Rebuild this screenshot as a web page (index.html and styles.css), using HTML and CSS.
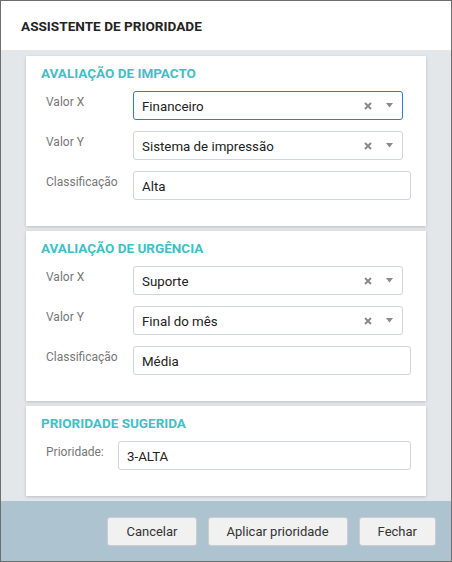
FILE: index.html
```html
<!DOCTYPE html>
<html lang="pt">
<head>
<meta charset="utf-8">
<title>Assistente de prioridade</title>
<link rel="stylesheet" href="styles.css">
</head>
<body>
<div class="dialog">
  <div class="header"><h1 class="title">ASSISTENTE DE PRIORIDADE</h1></div>
  <div class="content">
    <section class="panel">
      <h2 class="panel-title">AVALIAÇÃO DE IMPACTO</h2>
      <div class="form">
        <label class="label">Valor X</label>
        <div class="field select focused"><span class="value">Financeiro</span>
          <svg class="clear" width="8" height="8" viewBox="0 0 8 8"><path d="M1 1L7 7M7 1L1 7" stroke="#8a8a8a" stroke-width="2"/></svg>
          <svg class="caret" width="7" height="5" viewBox="0 0 7 5"><path d="M0 0H7L3.5 4.5Z" fill="#8a8a8a"/></svg>
        </div>
        <label class="label">Valor Y</label>
        <div class="field select"><span class="value">Sistema de impressão</span>
          <svg class="clear" width="8" height="8" viewBox="0 0 8 8"><path d="M1 1L7 7M7 1L1 7" stroke="#8a8a8a" stroke-width="2"/></svg>
          <svg class="caret" width="7" height="5" viewBox="0 0 7 5"><path d="M0 0H7L3.5 4.5Z" fill="#8a8a8a"/></svg>
        </div>
        <label class="label">Classificação</label>
        <div class="field"><span class="value">Alta</span></div>
      </div>
    </section>
    <section class="panel">
      <h2 class="panel-title">AVALIAÇÃO DE URGÊNCIA</h2>
      <div class="form">
        <label class="label">Valor X</label>
        <div class="field select"><span class="value">Suporte</span>
          <svg class="clear" width="8" height="8" viewBox="0 0 8 8"><path d="M1 1L7 7M7 1L1 7" stroke="#8a8a8a" stroke-width="2"/></svg>
          <svg class="caret" width="7" height="5" viewBox="0 0 7 5"><path d="M0 0H7L3.5 4.5Z" fill="#8a8a8a"/></svg>
        </div>
        <label class="label">Valor Y</label>
        <div class="field select"><span class="value">Final do mês</span>
          <svg class="clear" width="8" height="8" viewBox="0 0 8 8"><path d="M1 1L7 7M7 1L1 7" stroke="#8a8a8a" stroke-width="2"/></svg>
          <svg class="caret" width="7" height="5" viewBox="0 0 7 5"><path d="M0 0H7L3.5 4.5Z" fill="#8a8a8a"/></svg>
        </div>
        <label class="label">Classificação</label>
        <div class="field"><span class="value">Média</span></div>
      </div>
    </section>
    <section class="panel">
      <h2 class="panel-title">PRIORIDADE SUGERIDA</h2>
      <div class="form form-narrow">
        <label class="label">Prioridade:</label>
        <div class="field"><span class="value">3-ALTA</span></div>
      </div>
    </section>
  </div>
  <div class="footer">
    <button class="btn">Cancelar</button>
    <button class="btn">Aplicar prioridade</button>
    <button class="btn">Fechar</button>
  </div>
</div>
</body>
</html>
```
FILE: styles.css
```css
* { box-sizing: border-box; }
html, body { margin: 0; padding: 0; }
body {
  font-family: Roboto, "Liberation Sans", sans-serif;
  background: #ffffff;
}
.dialog {
  width: 452px;
  height: 562px;
  border: 1px solid #6e6e6e;
  display: flex;
  flex-direction: column;
  background: #fff;
}
.header {
  height: 49px;
  display: flex;
  align-items: center;
  padding-left: 20px;
  background: #fff;
}
.title {
  margin: 0;
  font-size: 13.6px;
  font-weight: 700;
  color: #242424;
  line-height: 16px;
}
.content {
  flex: 1;
  background: #e3e7ea;
  padding: 6px 25px 5px;
  display: flex;
  flex-direction: column;
  gap: 5px;
}
.panel {
  background: #fff;
  padding: 9px 15px 26px;
  box-shadow: 0 1px 3px rgba(0, 0, 0, 0.18);
}
.panel-title {
  margin: 0 0 10px;
  font-size: 13.5px;
  line-height: 16px;
  font-weight: 700;
  color: #3fbfc7;
}
.form {
  display: grid;
  grid-template-columns: 87px 1fr;
  row-gap: 11px;
  padding-left: 5px;
}
.form-narrow {
  grid-template-columns: 72px 1fr;
}
.label {
  font-size: 12px;
  line-height: 14px;
  color: #777;
  padding-top: 4px;
}
.field {
  height: 29px;
  border: 1px solid #d0d5d9;
  border-radius: 3px;
  display: flex;
  align-items: center;
  padding: 0 8px;
  font-size: 13.3px;
  color: #222;
  background: #fff;
}
.field .value { flex: 1; padding-top: 1px; }
.select {
  margin-right: 8px;
  padding-right: 8px;
}
.focused {
  border-color: #2f80bf;
}
.clear { margin-right: 14px; margin-top: 1px; }
.caret { margin-right: 1px; }
.footer {
  height: 60px;
  background: #adc3cf;
  display: flex;
  justify-content: flex-end;
  align-items: center;
  gap: 11px;
  padding-right: 15px;
}
.btn {
  height: 29px;
  padding: 0 18px;
  border: 1px solid #c9cdd1;
  border-radius: 3px;
  background: #f1f1f1;
  font-family: Roboto, "Liberation Sans", sans-serif;
  font-size: 13px;
  color: #333;
}
```
